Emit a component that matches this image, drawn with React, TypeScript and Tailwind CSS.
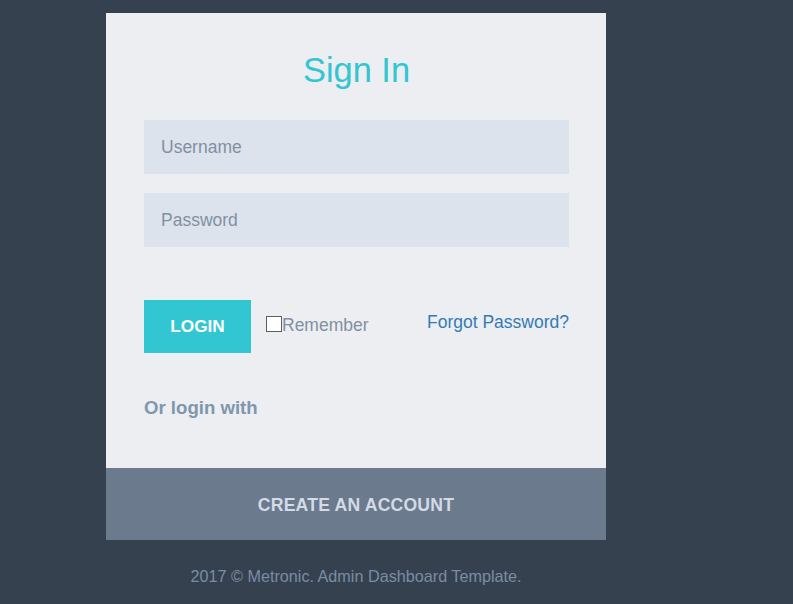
const App = () => {
  return (
    <div className="min-h-[604px] w-full bg-[#364150] pt-[13px] font-['Liberation_Sans',Arial,sans-serif]">
      <div className="ml-[106px] w-[500px]">
        <form className="flex flex-col bg-[#eceef1] pl-[38px] pr-[37px] pt-[37px] pb-[48px]">
          <h3 className="mb-[30px] h-[40px] text-center text-[34.4px] leading-[40px] text-[#32c5d2]">
            Sign In
          </h3>
          <div className="flex flex-col gap-[19px]">
            <input
              type="text"
              placeholder="Username"
              className="h-[54px] w-full bg-[#dde3ec] px-[17px] text-[17.5px] text-[#8290a3] outline-none placeholder:text-[#8290a3]"
            />
            <input
              type="password"
              placeholder="Password"
              className="h-[54px] w-full bg-[#dde3ec] px-[17px] text-[17.5px] text-[#8290a3] outline-none placeholder:text-[#8290a3]"
            />
          </div>
          <div className="mt-[53px] flex items-center">
            <button
              type="submit"
              className="h-[53px] w-[107px] bg-[#32c5d2] text-[17.2px] font-bold text-white"
            >
              LOGIN
            </button>
            <label className="ml-[15px] -mt-[3px] flex items-center text-[17.5px] text-[#8290a3]">
              <span className="mt-[-2px] h-[16px] w-[16px] border border-[#5f5f5f] bg-white" />
              Remember
            </label>
            <a href="#" className="ml-auto -mt-[8px] text-[17.5px] text-[#337ab7]">
              Forgot Password?
            </a>
          </div>
          <h4 className="mt-[43px] text-[18.6px] leading-[24px] font-bold text-[#7f96ac]">
            Or login with
          </h4>
        </form>
        <div className="flex h-[72px] items-center justify-center bg-[#6c7a8d] pt-[3px]">
          <a href="#" className="text-[17.6px] font-bold tracking-[0.2px] text-[#d2dbe6]">
            CREATE AN ACCOUNT
          </a>
        </div>
        <div className="mt-[26px] text-center text-[16.2px] leading-[20px] text-[#7a8ca5]">
          2017 © Metronic. Admin Dashboard Template.
        </div>
      </div>
    </div>
  );
};

export default App;
